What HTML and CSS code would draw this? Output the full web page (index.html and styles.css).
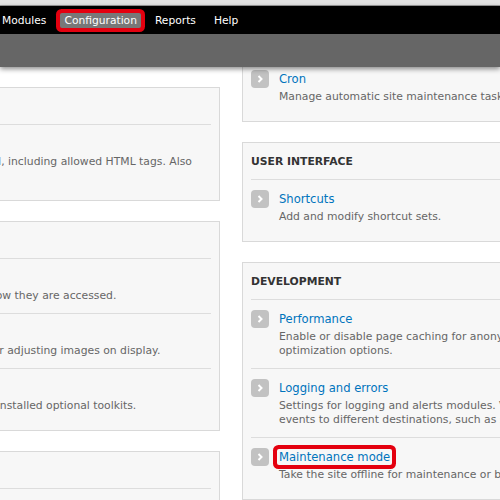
FILE: index.html
```html
<!DOCTYPE html>
<html lang="en">
<head>
    <meta charset="UTF-8">
    <title>Configuration</title>
    <link rel="stylesheet" href="styles.css">
</head>
<body>
    <div class="top-strip"></div>
    <div class="toolbar">
        <nav class="toolbar-menu">
            <a href="#">Modules</a>
            <a href="#" class="active">Configuration</a>
            <a href="#">Reports</a>
            <a href="#">Help</a>
        </nav>
        <div class="shortcuts"></div>
    </div>

    <div class="content">
        <!-- Left column -->
        <div class="column column-left">
            <div class="panel">
                <h3>Content authoring</h3>
                <div class="item">
                    <svg class="icon" width="18" height="18" viewBox="0 0 18 18"><rect width="18" height="18" rx="4" fill="#c2c2c2"/><path d="M7.5 6l3 3-3 3" fill="none" stroke="#fff" stroke-width="2"/></svg>
                    <div>
                        <div class="item-title"><a href="#">Text formats</a></div>
                        <div class="item-desc">Configure how content input by users is filtered, including allowed HTML tags. Also allows enabling of module-provided filters.</div>
                    </div>
                </div>
            </div>

            <div class="panel">
                <h3>Media</h3>
                <div class="item">
                    <svg class="icon" width="18" height="18" viewBox="0 0 18 18"><rect width="18" height="18" rx="4" fill="#c2c2c2"/><path d="M7.5 6l3 3-3 3" fill="none" stroke="#fff" stroke-width="2"/></svg>
                    <div>
                        <div class="item-title"><a href="#">File system</a></div>
                        <div class="item-desc">Tell Drupal where to store uploaded files and how they are accessed.</div>
                    </div>
                </div>
                <div class="item">
                    <svg class="icon" width="18" height="18" viewBox="0 0 18 18"><rect width="18" height="18" rx="4" fill="#c2c2c2"/><path d="M7.5 6l3 3-3 3" fill="none" stroke="#fff" stroke-width="2"/></svg>
                    <div>
                        <div class="item-title"><a href="#">Image styles</a></div>
                        <div class="item-desc">Configure styles that can be used for resizing or adjusting images on display.</div>
                    </div>
                </div>
                <div class="item">
                    <svg class="icon" width="18" height="18" viewBox="0 0 18 18"><rect width="18" height="18" rx="4" fill="#c2c2c2"/><path d="M7.5 6l3 3-3 3" fill="none" stroke="#fff" stroke-width="2"/></svg>
                    <div>
                        <div class="item-title"><a href="#">Image toolkit</a></div>
                        <div class="item-desc">Choose which image toolkit to use if you have installed optional toolkits.</div>
                    </div>
                </div>
            </div>

            <div class="panel">
                <h3>Search and metadata</h3>
                <div class="item">
                    <svg class="icon" width="18" height="18" viewBox="0 0 18 18"><rect width="18" height="18" rx="4" fill="#c2c2c2"/><path d="M7.5 6l3 3-3 3" fill="none" stroke="#fff" stroke-width="2"/></svg>
                    <div>
                        <div class="item-title"><a href="#">Clean URLs</a></div>
                        <div class="item-desc">Enable or disable clean URLs for your site.</div>
                    </div>
                </div>
            </div>
        </div>

        <!-- Right column -->
        <div class="column column-right">
            <div class="panel">
                <div class="item">
                    <svg class="icon" width="18" height="18" viewBox="0 0 18 18"><rect width="18" height="18" rx="4" fill="#c2c2c2"/><path d="M7.5 6l3 3-3 3" fill="none" stroke="#fff" stroke-width="2"/></svg>
                    <div>
                        <div class="item-title"><a href="#">Cron</a></div>
                        <div class="item-desc">Manage automatic site maintenance tasks.</div>
                    </div>
                </div>
            </div>

            <div class="panel">
                <h3>User interface</h3>
                <div class="item">
                    <svg class="icon" width="18" height="18" viewBox="0 0 18 18"><rect width="18" height="18" rx="4" fill="#c2c2c2"/><path d="M7.5 6l3 3-3 3" fill="none" stroke="#fff" stroke-width="2"/></svg>
                    <div>
                        <div class="item-title"><a href="#">Shortcuts</a></div>
                        <div class="item-desc">Add and modify shortcut sets.</div>
                    </div>
                </div>
            </div>

            <div class="panel">
                <h3>Development</h3>
                <div class="item">
                    <svg class="icon" width="18" height="18" viewBox="0 0 18 18"><rect width="18" height="18" rx="4" fill="#c2c2c2"/><path d="M7.5 6l3 3-3 3" fill="none" stroke="#fff" stroke-width="2"/></svg>
                    <div>
                        <div class="item-title"><a href="#">Performance</a></div>
                        <div class="item-desc">Enable or disable page caching for anonymous users and set CSS and JS bandwidth optimization options.</div>
                    </div>
                </div>
                <div class="item">
                    <svg class="icon" width="18" height="18" viewBox="0 0 18 18"><rect width="18" height="18" rx="4" fill="#c2c2c2"/><path d="M7.5 6l3 3-3 3" fill="none" stroke="#fff" stroke-width="2"/></svg>
                    <div>
                        <div class="item-title"><a href="#">Logging and errors</a></div>
                        <div class="item-desc">Settings for logging and alerts modules. Various modules can route Drupal's system events to different destinations, such as syslog, database, email, etc.</div>
                    </div>
                </div>
                <div class="item">
                    <svg class="icon" width="18" height="18" viewBox="0 0 18 18"><rect width="18" height="18" rx="4" fill="#c2c2c2"/><path d="M7.5 6l3 3-3 3" fill="none" stroke="#fff" stroke-width="2"/></svg>
                    <div>
                        <div class="item-title"><a href="#" class="marked">Maintenance mode</a></div>
                        <div class="item-desc">Take the site offline for maintenance or bring it back online.</div>
                    </div>
                </div>
            </div>
        </div>
    </div>
</body>
</html>
```

FILE: styles.css
```css
body {
    margin: 0;
    height: 500px;
    overflow: hidden;
    background: #fff;
    font-family: "DejaVu Sans", Verdana, sans-serif;
    color: #666;
}
.top-strip {
    height: 5px;
    background: #e2e2e2;
    border-bottom: 1px solid #9a9a9a;
}
.toolbar {
    position: relative;
    z-index: 2;
    box-shadow: 0 2px 5px rgba(0, 0, 0, 0.45);
}
.toolbar-menu {
    display: flex;
    align-items: center;
    height: 28px;
    margin-left: -7px;
    background: #000;
}
.toolbar-menu a {
    margin: 0 5px;
    padding: 0 4px;
    font-size: 10.7px;
    line-height: 15px;
    color: #fff;
    text-decoration: none;
}
.toolbar-menu a.active {
    background: #787878;
    border-radius: 2px;
    box-shadow: 0 0 0 4px #e4000f;
}
.shortcuts {
    height: 33px;
    background: #666;
}
.content {
    display: flex;
    gap: 22px;
    margin-left: -293px;
    padding-top: 20px;
}
.column {
    flex: none;
    width: 521px;
}
.column-left {
    width: 513px;
}
.column-right {
    margin-top: -28px;
}
.panel {
    margin-bottom: 20px;
    padding: 0 8px 7px;
    background: #f7f7f7;
    border: 1px solid #d9d9d9;
}
.panel h3 {
    margin: 10px 0 0;
    padding-bottom: 8px;
    border-bottom: 1px solid #ddd;
    font-size: 10.8px;
    line-height: 18px;
    text-transform: uppercase;
    color: #333;
}
.item {
    display: flex;
    gap: 10px;
    padding: 10px 0;
    border-bottom: 1px solid #ddd;
}
.item:last-child {
    border-bottom: none;
}
.icon {
    flex: none;
}
.item-title {
    font-size: 11.6px;
    line-height: 18px;
}
.item-title a {
    color: #0074bd;
    text-decoration: none;
}
.item-title a.marked {
    margin-left: -2px;
    padding: 1px 2px;
    border-radius: 2px;
    box-shadow: 0 0 0 4px #e4000f;
}
.item-desc {
    padding-top: 2px;
    font-size: 10.8px;
    line-height: 14px;
    color: #666;
}
```
